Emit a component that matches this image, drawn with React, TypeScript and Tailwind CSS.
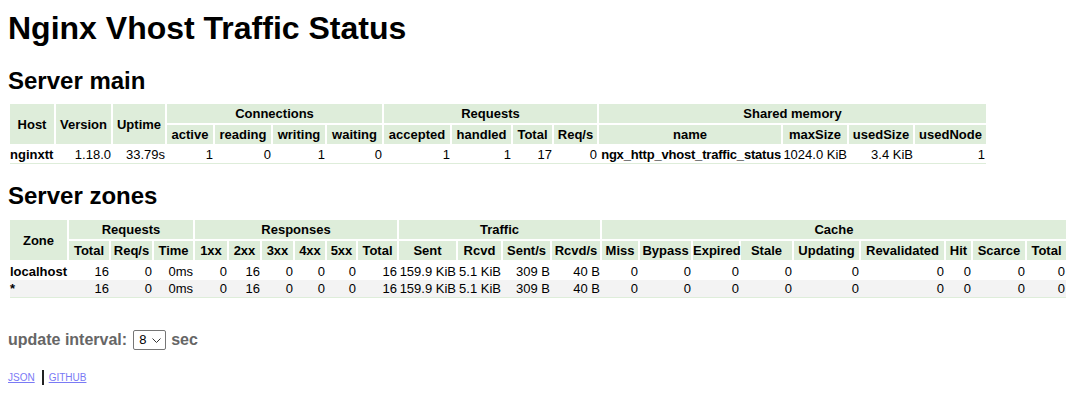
import React from "react";

const TH = "bg-[#deedda] border-white px-0 py-[2px] leading-[15px] font-bold text-center align-middle whitespace-nowrap";
const TD = "p-0 pr-[2px] h-[18px] leading-[15px] text-right whitespace-nowrap align-middle";
const TDL = "p-0 h-[18px] leading-[15px] text-left font-bold whitespace-nowrap align-middle";

type H = { t: string; w: string };

function Th({ t, w, last, rowSpan, colSpan }: { t: string; w?: string; last?: boolean; rowSpan?: number; colSpan?: number }) {
  return (
    <th rowSpan={rowSpan} colSpan={colSpan} className={TH + (last ? " border-b-2" : " border-r-2 border-b-2")}>
      {w ? <div className={w}>{t}</div> : t}
    </th>
  );
}

function ServerMain() {
  const sub: H[] = [
    { t: "active", w: "w-[46px]" },
    { t: "reading", w: "w-[56px]" },
    { t: "writing", w: "w-[52px]" },
    { t: "waiting", w: "w-[55px]" },
    { t: "accepted", w: "w-[66px]" },
    { t: "handled", w: "w-[59px]" },
    { t: "Total", w: "w-[39px]" },
    { t: "Req/s", w: "w-[43px]" },
    { t: "name", w: "w-[182px]" },
    { t: "maxSize", w: "w-[64px]" },
    { t: "usedSize", w: "w-[64px]" },
    { t: "usedNode", w: "w-[71px]" },
  ];
  const row = ["1.18.0", "33.79s", "1", "0", "1", "0", "1", "1", "17", "0"];
  const L = "border-b border-[#deedda]";
  return (
    <table className="border-separate border-spacing-0 ml-[2px] mt-[9px] text-[13px] text-black">
      <thead>
        <tr>
          <Th t="Host" w="w-[44px]" rowSpan={2} />
          <Th t="Version" w="w-[55px]" rowSpan={2} />
          <Th t="Uptime" w="w-[52px]" rowSpan={2} />
          <Th t="Connections" colSpan={4} />
          <Th t="Requests" colSpan={4} />
          <Th t="Shared memory" colSpan={4} last />
        </tr>
        <tr>
          {sub.map((s, i) => (
            <Th key={i} t={s.t} w={s.w} last={i === sub.length - 1} />
          ))}
        </tr>
      </thead>
      <tbody>
        <tr>
          <td className={TDL + " " + L}>nginxtt</td>
          {row.map((v, i) => (
            <td key={i} className={TD + " " + L}>{v}</td>
          ))}
          <td className={TD + " " + L + " font-bold tracking-[-0.2px]"}>ngx_http_vhost_traffic_status</td>
          <td className={TD + " " + L}>1024.0 KiB</td>
          <td className={TD + " " + L}>3.4 KiB</td>
          <td className={"p-0 pr-[1px] h-[18px] leading-[15px] text-right align-middle " + L}>1</td>
        </tr>
      </tbody>
    </table>
  );
}

function ServerZones() {
  const sub: H[] = [
    { t: "Total", w: "w-[40px]" },
    { t: "Req/s", w: "w-[41px]" },
    { t: "Time", w: "w-[39px]" },
    { t: "1xx", w: "w-[32px]" },
    { t: "2xx", w: "w-[31px]" },
    { t: "3xx", w: "w-[31px]" },
    { t: "4xx", w: "w-[30px]" },
    { t: "5xx", w: "w-[29px]" },
    { t: "Total", w: "w-[39px]" },
    { t: "Sent", w: "w-[57px]" },
    { t: "Rcvd", w: "w-[43px]" },
    { t: "Sent/s", w: "w-[47px]" },
    { t: "Rcvd/s", w: "w-[48px]" },
    { t: "Miss", w: "w-[36px]" },
    { t: "Bypass", w: "w-[51px]" },
    { t: "Expired", w: "w-[46px]" },
    { t: "Stale", w: "w-[51px]" },
    { t: "Updating", w: "w-[65px]" },
    { t: "Revalidated", w: "w-[83px]" },
    { t: "Hit", w: "w-[25px]" },
    { t: "Scarce", w: "w-[52px]" },
    { t: "Total", w: "w-[39px]" },
  ];
  const vals = ["16", "0", "0ms", "0", "16", "0", "0", "0", "16", "159.9 KiB", "5.1 KiB", "309 B", "40 B", "0", "0", "0", "0", "0", "0", "0", "0", "0"];
  const zones = ["localhost", "*"];
  return (
    <table className="border-separate border-spacing-0 ml-[2px] mt-[10px] text-[13px] text-black">
      <thead>
        <tr>
          <Th t="Zone" w="w-[57px]" rowSpan={2} />
          <Th t="Requests" colSpan={3} />
          <Th t="Responses" colSpan={6} />
          <Th t="Traffic" colSpan={4} />
          <Th t="Cache" colSpan={9} last />
        </tr>
        <tr>
          {sub.map((s, i) => (
            <Th key={i} t={s.t} w={s.w} last={i === sub.length - 1} />
          ))}
        </tr>
      </thead>
      <tbody>
        {zones.map((z, zi) => {
          const rc = zi === 1 ? " bg-[#f3f3f3] border-b border-[#deedda]" : "";
          return (
            <tr key={z}>
              <td className={TDL + rc}>{z}</td>
              {vals.map((v, i) => (
                <td key={i} className={(i === vals.length - 1 ? "p-0 pr-[1px] h-[18px] leading-[15px] text-right whitespace-nowrap align-middle" : TD) + rc}>{v}</td>
              ))}
            </tr>
          );
        })}
      </tbody>
    </table>
  );
}

export default function App() {
  return (
    <div className="bg-white w-[1084px] h-[398px] overflow-hidden px-[8px] pt-[10px]" style={{ fontFamily: '"Liberation Sans", Arial, sans-serif' }}>
      <h1 className="text-[32px] leading-[36px] font-bold text-black m-0">Nginx Vhost Traffic Status</h1>
      <h2 className="text-[24px] leading-[28px] font-bold text-black mt-[21px]">Server main</h2>
      <ServerMain />
      <h2 className="text-[24px] leading-[28px] font-bold text-black mt-[18px]">Server zones</h2>
      <ServerZones />
      <div className="flex items-center mt-[31px] h-[22px] text-[16px] font-bold text-[#666666]">
        <span>update interval:</span>
        <span className="relative inline-flex ml-[6px] mr-[5px]">
          <select defaultValue="8" className="appearance-none w-[33px] h-[20px] border border-[#767676] rounded-[2px] bg-white text-black font-normal text-[13px] pl-[5px] leading-[18px] outline-none">
            {[1, 2, 3, 4, 5, 6, 7, 8, 9, 10].map((n) => (
              <option key={n} value={String(n)}>{n}</option>
            ))}
          </select>
          <svg className="absolute right-[5px] top-[8px] pointer-events-none" width="9" height="5" viewBox="0 0 9 5">
            <path d="M0.5 0.5 L4.5 4.5 L8.5 0.5" fill="none" stroke="#333" strokeWidth="1" />
          </svg>
        </span>
        <span>sec</span>
      </div>
      <div className="flex items-center mt-[19px] h-[15px] text-[10px] leading-[12px]">
        <a href="#" className="text-[#7a7af5] underline">JSON</a>
        <span className="inline-block w-[2px] h-[15px] bg-[#222] ml-[7px] mr-[5px]" />
        <a href="#" className="text-[#7a7af5] underline">GITHUB</a>
      </div>
    </div>
  );
}
